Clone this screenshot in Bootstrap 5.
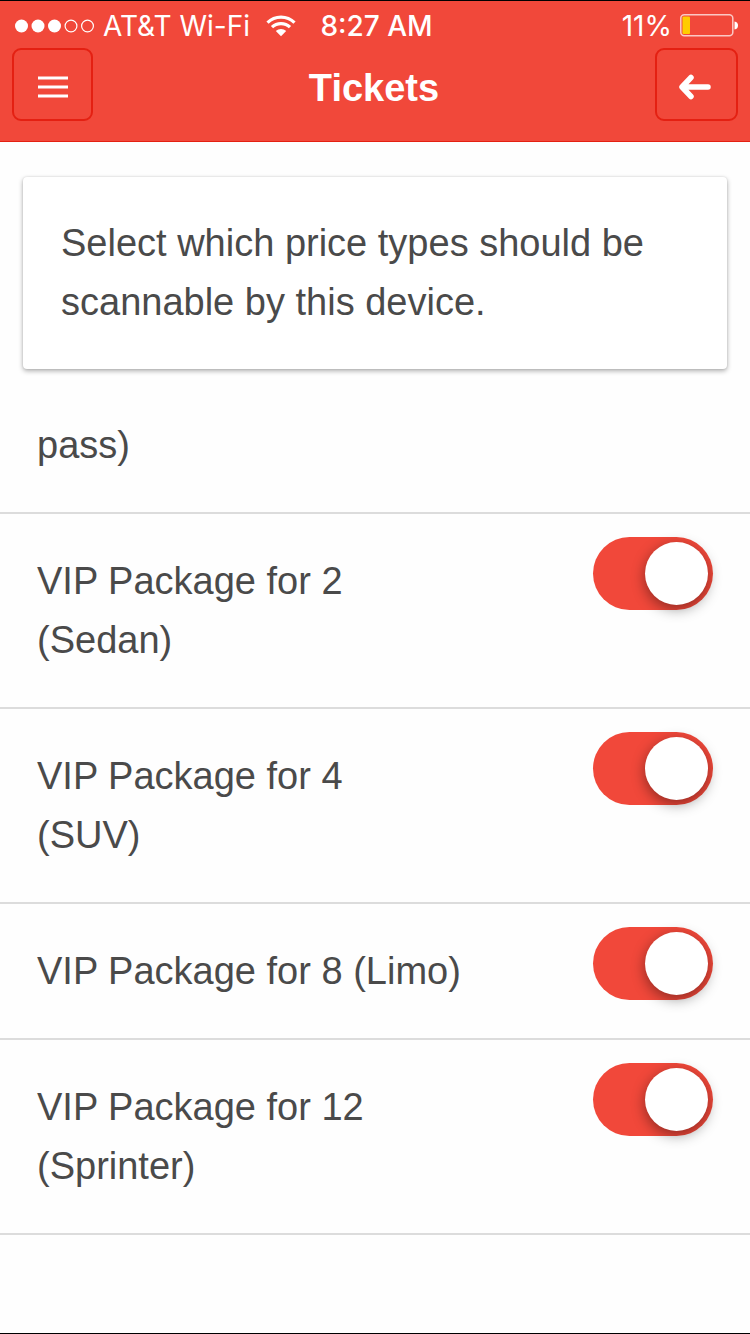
<!DOCTYPE html>
<html lang="en">
<head>
<meta charset="utf-8">
<meta name="viewport" content="width=device-width, initial-scale=1">
<title>Tickets</title>
<link href="https://cdn.jsdelivr.net/npm/bootstrap@5.3.0/dist/css/bootstrap.min.css" rel="stylesheet">
<style>
  :root { --brand: #f1483a; --brand-dark: #e42012; --ink: #4a4a4a; --line: #dcdcdc; }
  body {
    background: #fefefe; color: var(--ink);
    border-top: 1px solid #000; border-bottom: 1px solid #000;
    font-family: "Liberation Sans", Arial, sans-serif;
    font-size: 38px; line-height: 59px;
  }
  .app-header { background: var(--brand); border-bottom: 1px solid var(--brand-dark); color: #fff; }
  .status-bar { font: 400 28px/46px Inter, sans-serif; height: 47px; padding: 2px 12px 0 15px; }
  .status-side { flex: 1 1 0; white-space: nowrap; }
  .status-bar svg { display: block; flex: none; }
  .status-time { font-weight: 500; }
  .title-bar { padding: 0 12px 17px; }
  .title-bar h1 { font-size: 38px; font-weight: 700; line-height: 72px; padding-top: 4px; }
  .bar-btn {
    height: 73px; width: 81px; padding: 4px 0 0; border: 2px solid var(--brand-dark);
    border-radius: 9px; color: #fff; background: transparent;
  }
  .bar-btn-back { width: 83px; padding-right: 3px; }
  .bar-btn:hover { background: var(--brand-dark); color: #fff; border-color: var(--brand-dark); }
  .bar-btn svg { display: block; margin: auto; }
  .notice {
    margin: 35px 23px 0; border: 0; border-radius: 4px; background: #fff; color: var(--ink);
    box-shadow: 0 2px 5px rgba(0,0,0,.32), 0 0 2px rgba(0,0,0,.12);
  }
  .notice .card-body { padding: 37px 38px; }
  .ticket-list { padding-top: 9px; }
  .ticket-row { padding: 38px 37px 37px; border-bottom: 2px solid var(--line); }
  .form-check-input.ticket-switch {
    position: relative; width: 120px; height: 73px; margin: -15px 0 0; border: 0;
    border-radius: 37px; background: #ddd; float: none; flex: none; cursor: pointer;
  }
  .form-check-input.ticket-switch:checked { background: var(--brand); }
  .ticket-switch::before {
    content: ""; position: absolute; top: 5px; left: 5px; width: 63px; height: 63px;
    border-radius: 50%; background: #fff; box-shadow: 0 4px 14px rgba(0,0,0,.42);
  }
  .ticket-switch:checked::before { left: auto; right: 5px; }
</style>
</head>
<body class="min-vh-100">
<header class="app-header">
  <div class="status-bar d-flex align-items-center">
    <div class="status-side d-flex align-items-center">
      <svg width="80" height="14" viewBox="0 0 80 14" aria-hidden="true">
        <g fill="#fff"><circle cx="6.5" cy="7" r="6.5"/><circle cx="23" cy="7" r="6.5"/><circle cx="39.500" cy="7" r="6.5"/></g>
        <g fill="none" stroke="#fff" stroke-width="1.2"><circle cx="56" cy="7" r="5.900"/><circle cx="72.500" cy="7" r="5.900"/></g>
      </svg>
      <span class="ms-2">AT&amp;T Wi-Fi</span>
      <svg class="ms-3" width="30" height="22" viewBox="0 0 30 22" aria-hidden="true">
        <g fill="none" stroke="#fff" stroke-width="3.200"><path d="M1.500 7.600C9 .2 21 .2 28.500 7.600"/><path d="M6 12.200C11 7.300 19 7.300 24 12.200"/></g>
        <path fill="#fff" d="M9.800 16C12.700 13.200 17.300 13.200 20.200 16L15 21.300Z"/>
      </svg>
    </div>
    <time class="status-time">8:27 AM</time>
    <div class="status-side d-flex align-items-center justify-content-end">
      <span>11%</span>
      <svg class="ms-2" width="58" height="23" viewBox="0 0 58 23" aria-hidden="true">
        <rect x=".8" y=".8" width="52" height="21" rx="3.500" fill="none" stroke="#fff" stroke-opacity=".7" stroke-width="1.500"/>
        <rect x="2.500" y="2.500" width="7.500" height="17.500" rx="1" fill="#fc0"/>
        <path fill="#fff" d="M54.500 7.500Q58 8 58 11.500T54.500 15.500Z"/>
      </svg>
    </div>
  </div>
  <div class="title-bar d-flex justify-content-between align-items-start">
    <button type="button" class="btn bar-btn" aria-label="Menu">
      <svg width="30" height="22" viewBox="0 0 30 22"><path d="M0 2h30M0 11h30M0 20h30" stroke="#fff" stroke-width="3"/></svg>
    </button>
    <h1 class="m-0">Tickets</h1>
    <button type="button" class="btn bar-btn bar-btn-back" aria-label="Back">
      <svg width="34" height="26" viewBox="0 0 34 26"><path d="M13 3.500L4 13L13 22.500M5 13H30" fill="none" stroke="#fff" stroke-width="5.500" stroke-linecap="round" stroke-linejoin="round"/></svg>
    </button>
  </div>
</header>
<main>
  <div class="card notice"><div class="card-body">Select which price types should be scannable by this device.</div></div>
  <ul class="ticket-list list-unstyled m-0">
    <li class="ticket-row">pass)</li>
    <li class="ticket-row d-flex justify-content-between">
      <label for="t2">VIP Package for 2<br>(Sedan)</label>
      <input class="form-check-input ticket-switch" type="checkbox" role="switch" id="t2" checked>
    </li>
    <li class="ticket-row d-flex justify-content-between">
      <label for="t4">VIP Package for 4<br>(SUV)</label>
      <input class="form-check-input ticket-switch" type="checkbox" role="switch" id="t4" checked>
    </li>
    <li class="ticket-row d-flex justify-content-between">
      <label for="t8">VIP Package for 8 (Limo)</label>
      <input class="form-check-input ticket-switch" type="checkbox" role="switch" id="t8" checked>
    </li>
    <li class="ticket-row d-flex justify-content-between">
      <label for="t12">VIP Package for 12<br>(Sprinter)</label>
      <input class="form-check-input ticket-switch" type="checkbox" role="switch" id="t12" checked>
    </li>
  </ul>
</main>
<script src="https://cdn.jsdelivr.net/npm/bootstrap@5.3.0/dist/js/bootstrap.bundle.min.js"></script>
</body>
</html>
